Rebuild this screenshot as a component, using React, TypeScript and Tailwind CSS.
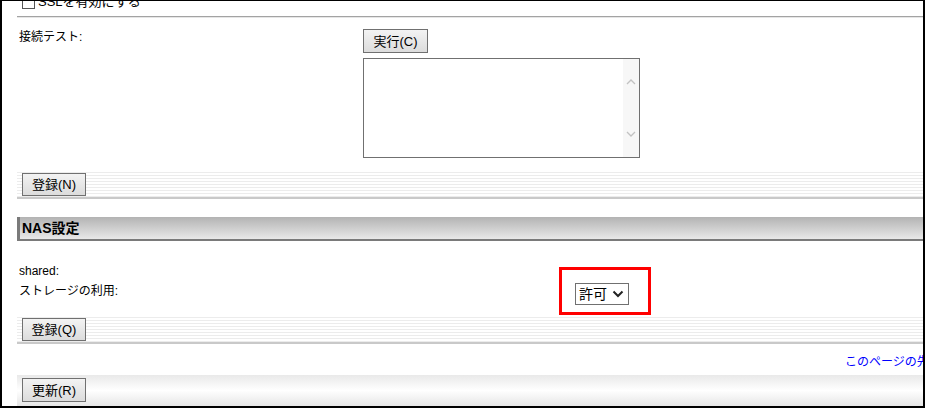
import React from 'react';

const font = "font-['Liberation_Sans','Noto_Sans_CJK_JP',sans-serif]";

function Btn({ label, className = '' }: { label: string; className?: string }) {
  return (
    <button
      className={`h-[23px] w-[64px] border border-[#707070] bg-gradient-to-b from-[#f3f3f3] to-[#dcdcdc] text-[13px] leading-none text-black ${className}`}
    >
      {label}
    </button>
  );
}

function StripeBar({ label }: { label: string }) {
  return (
    <div className="border-b-2 border-[#c9c9c9] bg-[repeating-linear-gradient(to_bottom,#ececec_0px,#ececec_1px,#ffffff_1px,#ffffff_3px)] py-[1px] pl-[5px]">
      <Btn label={label} />
    </div>
  );
}

export default function App() {
  return (
    <div className={`h-[408px] w-[925px] overflow-hidden border-t border-l-2 border-r-2 border-b-2 border-black bg-white ${font} text-[12px] text-black`}>
      <div className="-mt-[13px] pl-[15px]">
        {/* SSL row (scrolled off) */}
        <div className="flex h-[28px] items-center gap-[3px] pl-[5px]">
          <span className="inline-block h-[13px] w-[13px] border border-[#555] bg-white" />
          <span className="text-[13px]">SSLを有効にする</span>
        </div>
        <div className="h-[1px] bg-[#a3a3a3]" />
        <div className="h-[1px] bg-[#e6e6e6]" />

        {/* 接続テスト */}
        <div className="flex">
          <div className="w-[346px] pl-[2px] pt-[12px] leading-[14px]">接続テスト:</div>
          <div className="pt-[11px]">
            <Btn label="実行(C)" className="h-[24px] w-[65px]" />
            <div className="mt-[5px] flex h-[100px] w-[277px] border border-[#707070] bg-white">
              <div className="flex-1" />
              <div className="flex w-[16px] flex-col items-center justify-between bg-[#f7f7f7] py-[20px]">
                <svg width="10" height="6" viewBox="0 0 10 6">
                  <path d="M1 5 L5 1 L9 5" fill="none" stroke="#c2c2c2" strokeWidth="1.3" />
                </svg>
                <svg width="10" height="6" viewBox="0 0 10 6">
                  <path d="M1 1 L5 5 L9 1" fill="none" stroke="#c2c2c2" strokeWidth="1.3" />
                </svg>
              </div>
            </div>
          </div>
        </div>

        <div className="mt-[14px]">
          <StripeBar label="登録(N)" />
        </div>

        {/* NAS設定 */}
        <div className="mt-[18px] flex h-[24px] items-center border-b-2 border-l-[3px] border-[#7a7a7a] bg-gradient-to-b from-[#b3b3b3] to-[#e9e9e9] pl-[2px] text-[14px] font-bold">
          NAS設定
        </div>

        <div className="flex">
          <div className="w-[542px] pl-[2px] pt-[20px]">
            <div className="leading-[20px]">shared:</div>
            <div className="leading-[20px]">ストレージの利用:</div>
          </div>
          <div className="mt-[26px]">
            <div className="h-[48px] w-[92px] border-[3px] border-[#ff0000] pl-[13px] pt-[13px]">
              <div className="flex h-[22px] w-[54px] items-center justify-between border border-[#707070] bg-white pl-[3px] pr-[4px] text-[14px]">
                <span>許可</span>
                <svg width="12" height="8" viewBox="0 0 12 8">
                  <path d="M1.5 1.5 L6 6 L10.5 1.5" fill="none" stroke="#222" strokeWidth="2" />
                </svg>
              </div>
            </div>
          </div>
        </div>

        <div className="mt-[2px]">
          <StripeBar label="登録(Q)" />
        </div>

        <div className="h-[31px] overflow-hidden whitespace-nowrap pl-[828px] pt-[11px] leading-[14px] text-[#0000ff]">
          このページの先頭へ
        </div>

        <div className="h-[31px] bg-gradient-to-b from-[#e9e9e9] via-[#ffffff] to-[#e6e6e6] pl-[5px] pt-[3px]">
          <Btn label="更新(R)" className="h-[24px]" />
        </div>
      </div>
    </div>
  );
}
